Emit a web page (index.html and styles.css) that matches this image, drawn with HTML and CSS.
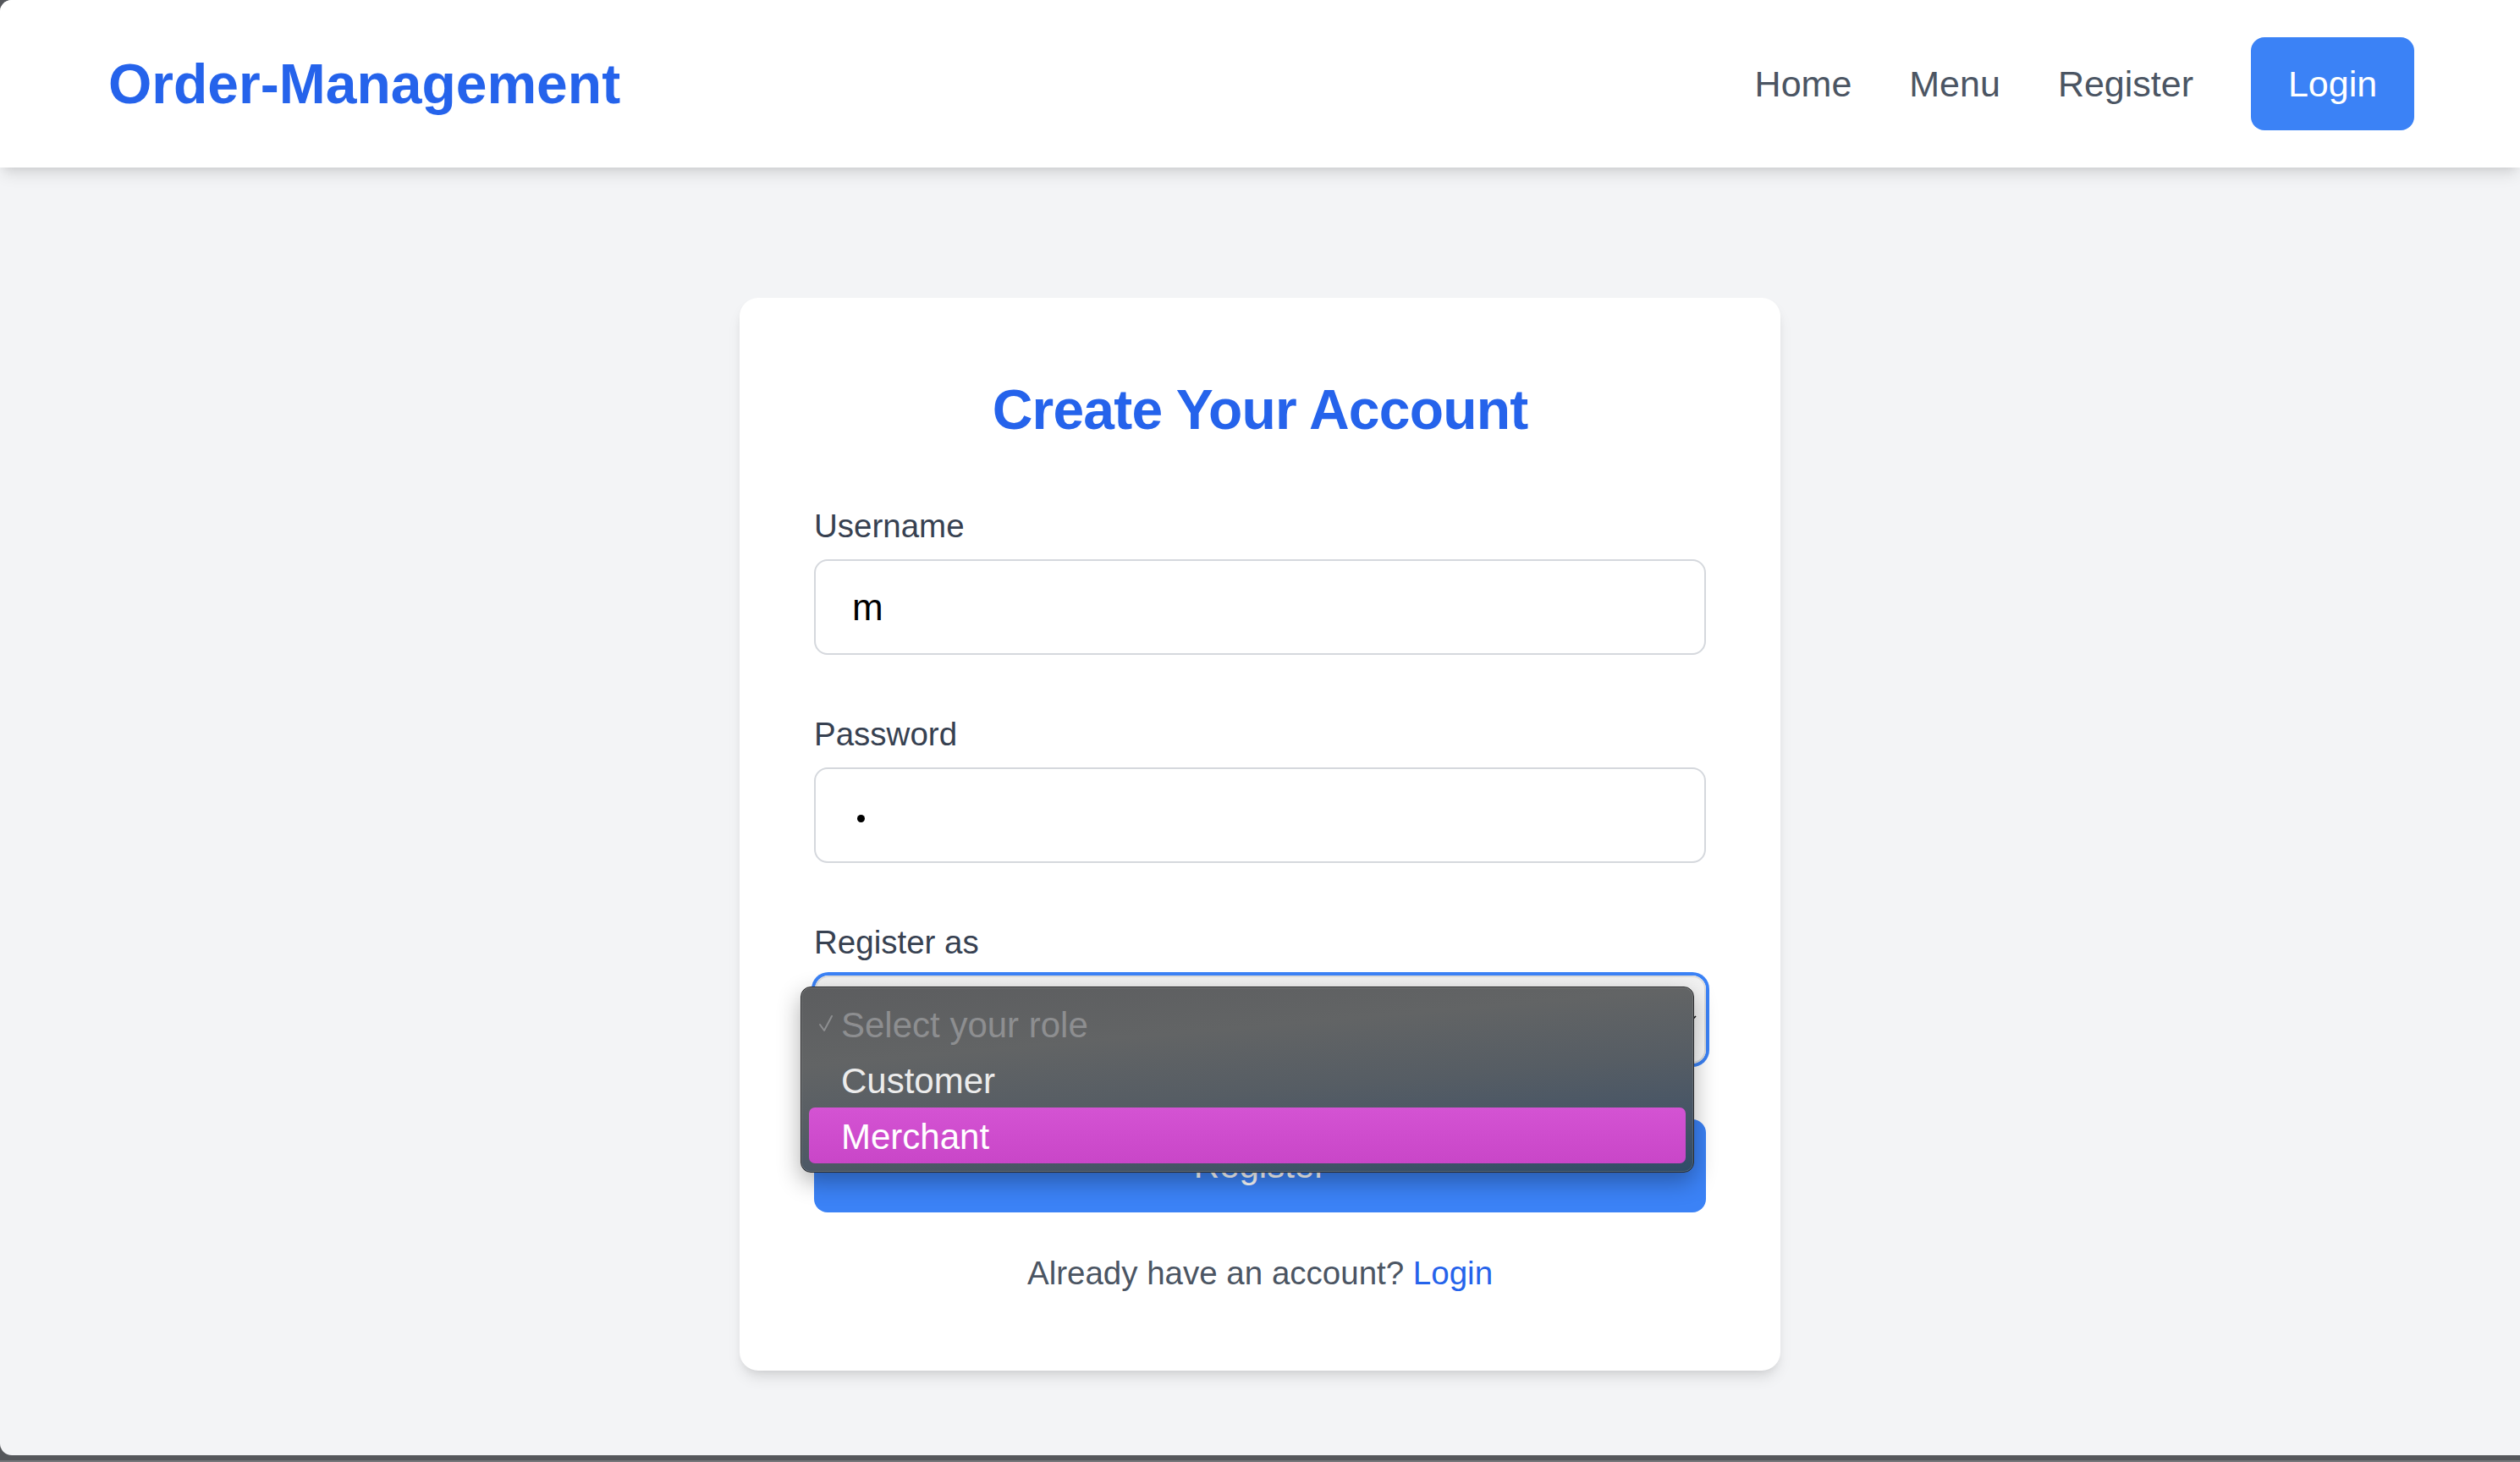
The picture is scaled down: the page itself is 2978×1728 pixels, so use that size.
FILE: index.html
```html
<!DOCTYPE html>
<html lang="en">
<head>
<meta charset="utf-8">
<title>Order-Management — Register</title>
<link rel="stylesheet" href="styles.css">
</head>
<body>
<div class="window">
  <header class="navbar">
    <a class="logo" href="#">Order-Management</a>
    <nav class="nav">
      <a class="nav-link" href="#">Home</a>
      <a class="nav-link" href="#">Menu</a>
      <a class="nav-link" href="#">Register</a>
      <a class="nav-btn" href="#">Login</a>
    </nav>
  </header>
  <main class="main">
    <div class="card">
      <h2 class="title">Create Your Account</h2>
      <div class="field">
        <label class="label">Username</label>
        <div class="input">m</div>
      </div>
      <div class="field">
        <label class="label">Password</label>
        <div class="input"><span class="dot"></span></div>
      </div>
      <div class="field field-select">
        <label class="label">Register as</label>
        <div class="select">
          <svg class="chev" width="10" height="8" viewBox="0 0 10 8"><path d="M1 2 L5 6 L9 2" fill="none" stroke="#111" stroke-width="1.6"/></svg>
          <div class="popup">
            <div class="opt opt-disabled"><svg class="check" width="18" height="21" viewBox="0 0 18 21"><path d="M2 12 L7 19 L16 2" fill="none" stroke="#8d8e90" stroke-width="2" stroke-linecap="round" stroke-linejoin="round"/></svg>Select your role</div>
            <div class="opt">Customer</div>
            <div class="opt opt-active">Merchant</div>
          </div>
        </div>
      </div>
      <button class="submit" type="button">Register</button>
      <p class="footer">Already have an account? <a class="footer-link" href="#">Login</a></p>
    </div>
  </main>
</div>
<div class="edge"></div>
</body>
</html>
```
FILE: styles.css
```css
* { box-sizing: border-box; }
html, body { margin: 0; padding: 0; }
body {
  background: #55575b;
  font-family: "Liberation Sans", Arial, sans-serif;
  width: 2978px;
  height: 1728px;
  overflow: hidden;
}
.window {
  height: 1720px;
  margin-bottom: 6px;
  background: #f3f4f6;
  border-radius: 14px 0 0 14px;
  overflow: hidden;
}
.edge { height: 2px; background: #76777a; }

.navbar {
  height: 198px;
  background: #fff;
  display: flex;
  align-items: center;
  justify-content: space-between;
  padding: 0 125px 0 128px;
  box-shadow: 0 11px 17px -3px rgba(0,0,0,0.1), 0 5px 11px -5px rgba(0,0,0,0.1);
  position: relative;
  z-index: 1;
}
.logo {
  font-size: 66px;
  font-weight: 700;
  color: #2563eb;
  text-decoration: none;
  line-height: 88px;
}
.nav { display: flex; align-items: center; gap: 68px; }
.nav-link {
  font-size: 43px;
  color: #4b5563;
  text-decoration: none;
  line-height: 66px;
}
.nav-btn {
  height: 110px;
  width: 193px;
  display: flex;
  align-items: center;
  justify-content: center;
  background: #3b82f6;
  color: #fff;
  font-size: 43px;
  border-radius: 16px;
  text-decoration: none;
}

.main { display: flex; justify-content: center; padding-top: 154px; }
.card {
  width: 1230px;
  background: #fff;
  border-radius: 22px;
  padding: 88px;
  box-shadow: 0 11px 17px -3px rgba(0,0,0,0.1), 0 5px 11px -5px rgba(0,0,0,0.1);
}
.title {
  margin: 0 0 66px;
  text-align: center;
  font-size: 66px;
  line-height: 88px;
  font-weight: 700;
  color: #2563eb;
  letter-spacing: -0.8px;
}
.field { margin-bottom: 66px; }
.label {
  display: block;
  font-size: 38.5px;
  line-height: 55px;
  color: #374151;
  margin-bottom: 12px;
}
.input {
  height: 113px;
  border: 2px solid #d5d8dd;
  border-radius: 16px;
  padding: 0 43px;
  display: flex;
  align-items: center;
  font-size: 44px;
  color: #000;
  background: #fff;
}
.dot {
  width: 9px;
  height: 9px;
  border-radius: 50%;
  background: #000;
  margin-left: 6px;
  margin-top: 8px;
}
.select {
  position: relative;
  height: 104px;
  margin-left: 1px;
  border: 2px solid #dedede;
  border-radius: 16px;
  background: linear-gradient(#f2f2f2, #fbfbfb);
  box-shadow: 0 0 0 4px #3b82f6;
}
.chev { position: absolute; right: 9px; top: 44px; }
.popup {
  position: absolute;
  left: -19px;
  top: 11px;
  width: 1056px;
  height: 220px;
  padding: 10px 9px;
  border: 1px solid #2b2c2e;
  border-radius: 12px;
  background: linear-gradient(175deg, #5c5d5f 0%, #626465 30%, #565d64 55%, #455466 80%, #2f4c69 100%);
  box-shadow: inset 0 0 0 1px rgba(255,255,255,0.12), 0 10px 28px rgba(0,0,0,0.32);
  z-index: 5;
}
.opt {
  position: relative;
  height: 66px;
  line-height: 70px;
  padding-left: 38px;
  font-size: 42px;
  color: #ececec;
  border-radius: 7px;
}
.opt-disabled { color: #8d8e90; }
.opt-active {
  background: linear-gradient(#d453d3, #c946c8);
  color: #fff;
}
.check { position: absolute; left: 11px; top: 22px; }
.submit {
  display: block;
  width: 100%;
  height: 110px;
  border: 0;
  border-radius: 16px;
  background: #3b82f6;
  color: #fff;
  font-family: "Liberation Sans", Arial, sans-serif;
  font-size: 42px;
}
.footer {
  margin: 44px 0 0;
  text-align: center;
  font-size: 38.5px;
  line-height: 55px;
  color: #4b5563;
}
.footer-link { color: #2563eb; text-decoration: none; }
```
